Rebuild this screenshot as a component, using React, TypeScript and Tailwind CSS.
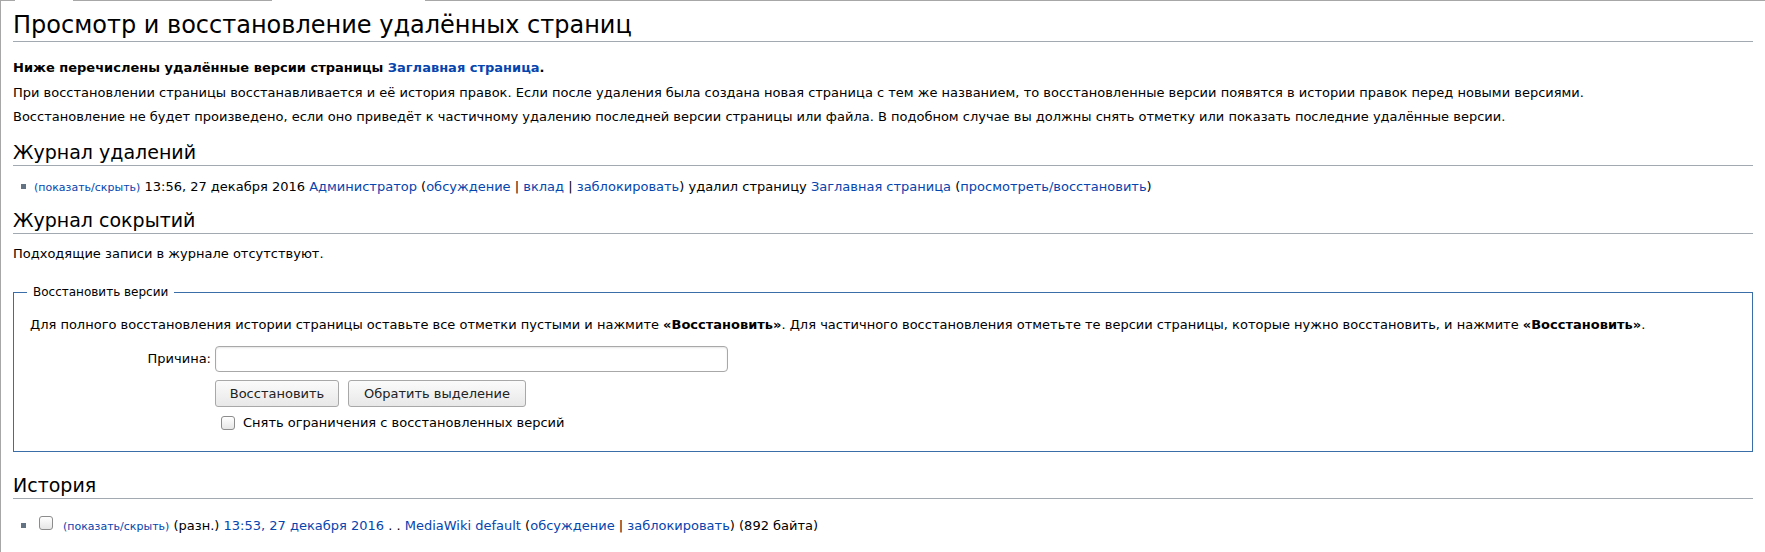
import React from 'react';

const link = 'text-[#0645ad]';

function Bullet() {
  return <span className="inline-block w-[5px] h-[5px] bg-[#637383] mr-[8px] align-middle relative top-[-1px]" />;
}

function Box({ className = '' }: { className?: string }) {
  return (
    <input
      type="checkbox"
      className={`appearance-none w-[14px] h-[14px] border border-[#8c8c8c] rounded-[3px] bg-gradient-to-b from-white to-[#e6e6e6] ${className}`}
    />
  );
}

function Heading({ children, className = '' }: { children: React.ReactNode; className?: string }) {
  return (
    <h2 className={`text-[19px] leading-[26px] text-black border-b border-[#a2a9b1] ${className}`}>{children}</h2>
  );
}

export default function App() {
  return (
    <div className="w-[1765px] h-[552px] bg-white font-['DejaVu_Sans',sans-serif] text-[13px] text-black overflow-hidden">
      {/* top edge, broken where the tabs sit */}
      <div className="flex h-px">
        <div className="w-[15px] bg-[#a7a7a7]" />
        <div className="w-[58px]" />
        <div className="w-[199px] bg-[#a7a7a7]" />
        <div className="w-[153px]" />
        <div className="flex-1 bg-[#a7a7a7]" />
      </div>

      <div className="w-[1756px] border-l border-b border-[#a7a7a7] pl-[12px] pr-[3px] pb-[15px]">
        <h1 className="pt-[8px] text-[24px] leading-[32px] border-b border-[#a2a9b1]">
          Просмотр и восстановление удалённых страниц
        </h1>

        <p className="mt-[16px] leading-[20px] font-bold">
          Ниже перечислены удалённые версии страницы <a className={link}>Заглавная страница</a>.
        </p>
        <p className="mt-[5px] leading-[20px]">
          При восстановлении страницы восстанавливается и её история правок. Если после удаления была создана новая страница с тем же названием, то восстановленные версии появятся в истории правок перед новыми версиями.
        </p>
        <p className="mt-[4px] leading-[20px]">
          Восстановление не будет произведено, если оно приведёт к частичному удалению последней версии страницы или файла. В подобном случае вы должны снять отметку или показать последние удалённые версии.
        </p>

        <Heading className="mt-[12px]">Журнал удалений</Heading>
        <ul className="mt-[11px] pl-[8px] leading-[20px]">
          <li>
            <Bullet />
            <a className={`${link} text-[11px]`}>(показать/скрыть)</a> 13:56, 27 декабря 2016{' '}
            <a className={link}>Администратор</a> (<a className={link}>обсуждение</a> | <a className={link}>вклад</a> |{' '}
            <a className={link}>заблокировать</a>) удалил страницу <a className={link}>Заглавная страница</a> (
            <a className={link}>просмотреть/восстановить</a>)
          </li>
        </ul>

        <Heading className="mt-[9px]">Журнал сокрытий</Heading>
        <p className="mt-[10px] leading-[20px]">Подходящие записи в журнале отсутствуют.</p>

        <fieldset className="mt-[20px] border border-[#3a6ea8] pl-[16px] pr-[16px] pb-[18px]">
          <legend className="ml-[-3px] px-[6px] text-[12px] leading-[16px]">Восстановить версии</legend>
          <p className="mt-[15px] leading-[20px]">
            Для полного восстановления истории страницы оставьте все отметки пустыми и нажмите <b>«Восстановить»</b>. Для частичного восстановления отметьте те версии страницы, которые нужно восстановить, и нажмите <b>«Восстановить»</b>.
          </p>
          <div className="mt-[11px] flex items-center">
            <label className="w-[185px] text-right pr-[4px]">Причина:</label>
            <input
              type="text"
              className="w-[513px] h-[26px] border border-[#a8a8a8] rounded-[4px] bg-white shadow-[inset_0_1px_2px_rgba(0,0,0,0.1)]"
            />
          </div>
          <div className="mt-[8px] pl-[185px] flex gap-[9px]">
            <button className="w-[124px] h-[27px] border border-[#a8a8a8] rounded-[3px] bg-gradient-to-b from-[#fbfbfb] to-[#e8e8e8] text-[#222]">
              Восстановить
            </button>
            <button className="w-[178px] h-[27px] border border-[#a8a8a8] rounded-[3px] bg-gradient-to-b from-[#fbfbfb] to-[#e8e8e8] text-[#222]">
              Обратить выделение
            </button>
          </div>
          <div className="mt-[6px] pl-[191px] flex items-center gap-[8px] leading-[20px]">
            <Box />
            <span>Снять ограничения с восстановленных версий</span>
          </div>
        </fieldset>

        <Heading className="mt-[20px]">История</Heading>
        <ul className="mt-[17px] pl-[8px] leading-[20px]">
          <li className="flex items-center">
            <Bullet />
            <Box className="ml-[5px] mr-[10px] relative top-[-4px]" />
            <span>
              <a className={`${link} text-[11px]`}>(показать/скрыть)</a> (разн.){' '}
              <a className={link}>13:53, 27 декабря 2016</a> . . <a className={link}>MediaWiki default</a> (
              <a className={link}>обсуждение</a> | <a className={link}>заблокировать</a>) (892 байта)
            </span>
          </li>
        </ul>
      </div>
    </div>
  );
}
